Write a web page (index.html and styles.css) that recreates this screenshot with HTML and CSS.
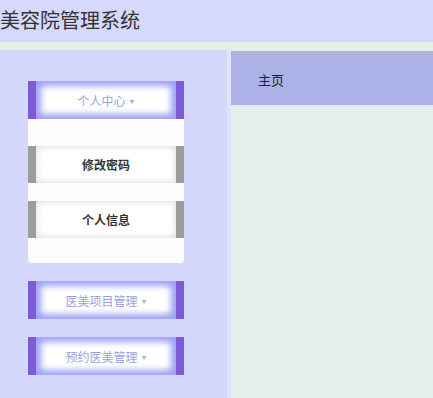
FILE: index.html
```html
<!DOCTYPE html>
<html lang="zh-CN">
<head>
    <meta charset="UTF-8">
    <meta name="viewport" content="width=device-width, initial-scale=1.0">
    <title>美容院管理系统</title>
    <link rel="stylesheet" href="styles.css">
</head>
<body>
    <div class="header">
        <h1 class="title">美容院管理系统</h1>
    </div>
    <div class="main">
        <div class="sidebar">
            <div class="menu">
                <div class="drop open">个人中心 <span class="caret">▼</span></div>
                <div class="panel">
                    <div class="item">修改密码</div>
                    <div class="item">个人信息</div>
                </div>
                <div class="drop">医美项目管理 <span class="caret">▼</span></div>
                <div class="drop">预约医美管理 <span class="caret">▼</span></div>
            </div>
        </div>
        <div class="content">
            <div class="crumb">主页</div>
        </div>
    </div>
</body>
</html>
```
FILE: styles.css
```css
* {
    margin: 0;
    padding: 0;
    box-sizing: border-box;
}
html, body {
    height: 100%;
    overflow: hidden;
}
body {
    background-color: #e5efea;
    font-family: "Noto Sans CJK SC", "Noto Sans", sans-serif;
    color: #333;
}
.header {
    height: 42px;
    background-color: #d6d9fc;
    display: flex;
    align-items: center;
}
.title {
    font-size: 20px;
    font-weight: normal;
    color: #333;
    margin-top: -4px;
}
.main {
    display: flex;
    margin-top: 8px;
    height: calc(100% - 50px);
}
.sidebar {
    width: 231px;
    flex-shrink: 0;
    background-color: #d4d8fc;
    border-right: 4px solid #dfe3fb;
    padding: 31px 0 0 28px;
}
.menu {
    width: 156px;
    display: flex;
    flex-direction: column;
}
.drop {
    height: 38px;
    background-color: #fff;
    border-left: 8px solid #7d5bd7;
    border-right: 8px solid #7d5bd7;
    box-shadow: inset 0 0 6px 5px #9ea1f6;
    color: #9c9fd9;
    font-size: 12px;
    display: flex;
    align-items: center;
    justify-content: center;
    margin-bottom: 18px;
}
.drop.open {
    margin-bottom: 0;
}
.caret {
    font-size: 5px;
    margin-left: 4px;
    color: #b0b2da;
}
.panel {
    background-color: #fdfdfd;
    border-radius: 0 0 4px 4px;
    padding: 27px 0 25px;
    display: flex;
    flex-direction: column;
    gap: 18px;
    margin-bottom: 18px;
}
.item {
    height: 37px;
    background-color: #fff;
    border-left: 8px solid #9c9c9a;
    border-right: 8px solid #9c9c9a;
    box-shadow: inset 0 0 6px 1px #ddd;
    color: #333;
    font-size: 12px;
    font-weight: bold;
    display: flex;
    align-items: center;
    justify-content: center;
}
.content {
    flex: 1;
    padding-top: 1px;
}
.crumb {
    height: 54px;
    background-color: #acb1e8;
    padding-left: 27px;
    padding-top: 19px;
    font-size: 13px;
    color: #222;
}
```
